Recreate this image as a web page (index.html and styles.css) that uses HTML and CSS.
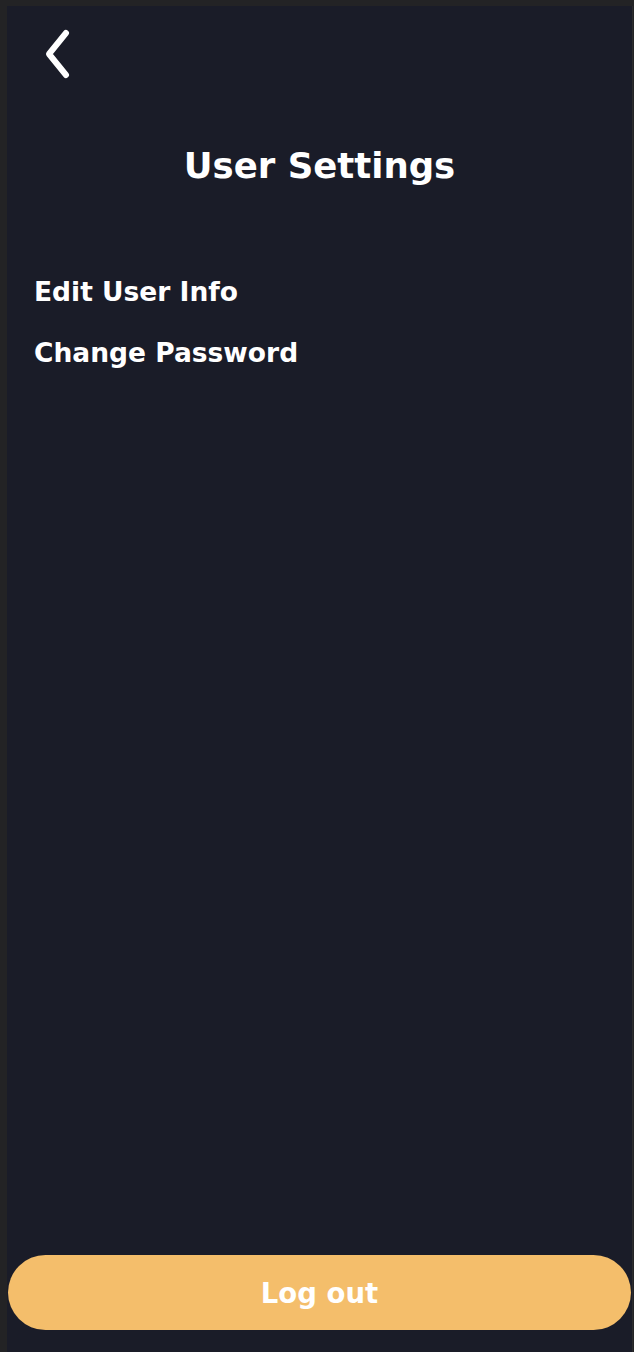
FILE: index.html
```html
<!DOCTYPE html>
<html>
<head>
<meta charset="utf-8">
<link rel="stylesheet" href="styles.css">
</head>
<body>
<div class="app">
  <header class="top">
    <button class="back" aria-label="Back">
      <svg width="30" height="52" viewBox="0 0 30 52"><path d="M23 5 L6 26 L23 47" fill="none" stroke="#fff" stroke-width="6" stroke-linecap="round" stroke-linejoin="round"/></svg>
    </button>
  </header>
  <h1 class="title">User Settings</h1>
  <nav class="menu">
    <a class="item">Edit User Info</a>
    <a class="item">Change Password</a>
  </nav>
  <div class="spacer"></div>
  <button class="logout">Log out</button>
</div>
</body>
</html>
```
FILE: styles.css
```css
html, body {
  margin: 0;
  padding: 0;
  background: #232325;
}
body {
  padding: 6px 0 0 7px;
  font-family: "DejaVu Sans", sans-serif;
  font-weight: bold;
  color: #fff;
}
.app {
  width: 626px;
  height: 1346px;
  background: #1a1c28;
  border-right: 1px solid #2c2c2e;
  box-sizing: border-box;
  display: flex;
  flex-direction: column;
}
.top {
  height: 100px;
  padding: 22px 0 0 36px;
  box-sizing: border-box;
}
.back {
  background: none;
  border: 0;
  padding: 0;
  display: block;
}
.back svg { display: block; }
.title {
  margin: 40px 0 0;
  text-align: center;
  font-size: 35.5px;
  line-height: 40px;
  font-weight: bold;
}
.menu {
  margin-top: 91px;
  padding-left: 27px;
  display: flex;
  flex-direction: column;
  gap: 31px;
}
.item {
  font-size: 26.5px;
  line-height: 30px;
}
.spacer { flex: 1; }
.logout {
  margin: 0 1px 22px 1px;
  height: 75px;
  border: 0;
  border-radius: 38px;
  background: #f4be6b;
  color: #fff;
  font-family: "DejaVu Sans", sans-serif;
  font-weight: bold;
  font-size: 27.5px;
}
```
